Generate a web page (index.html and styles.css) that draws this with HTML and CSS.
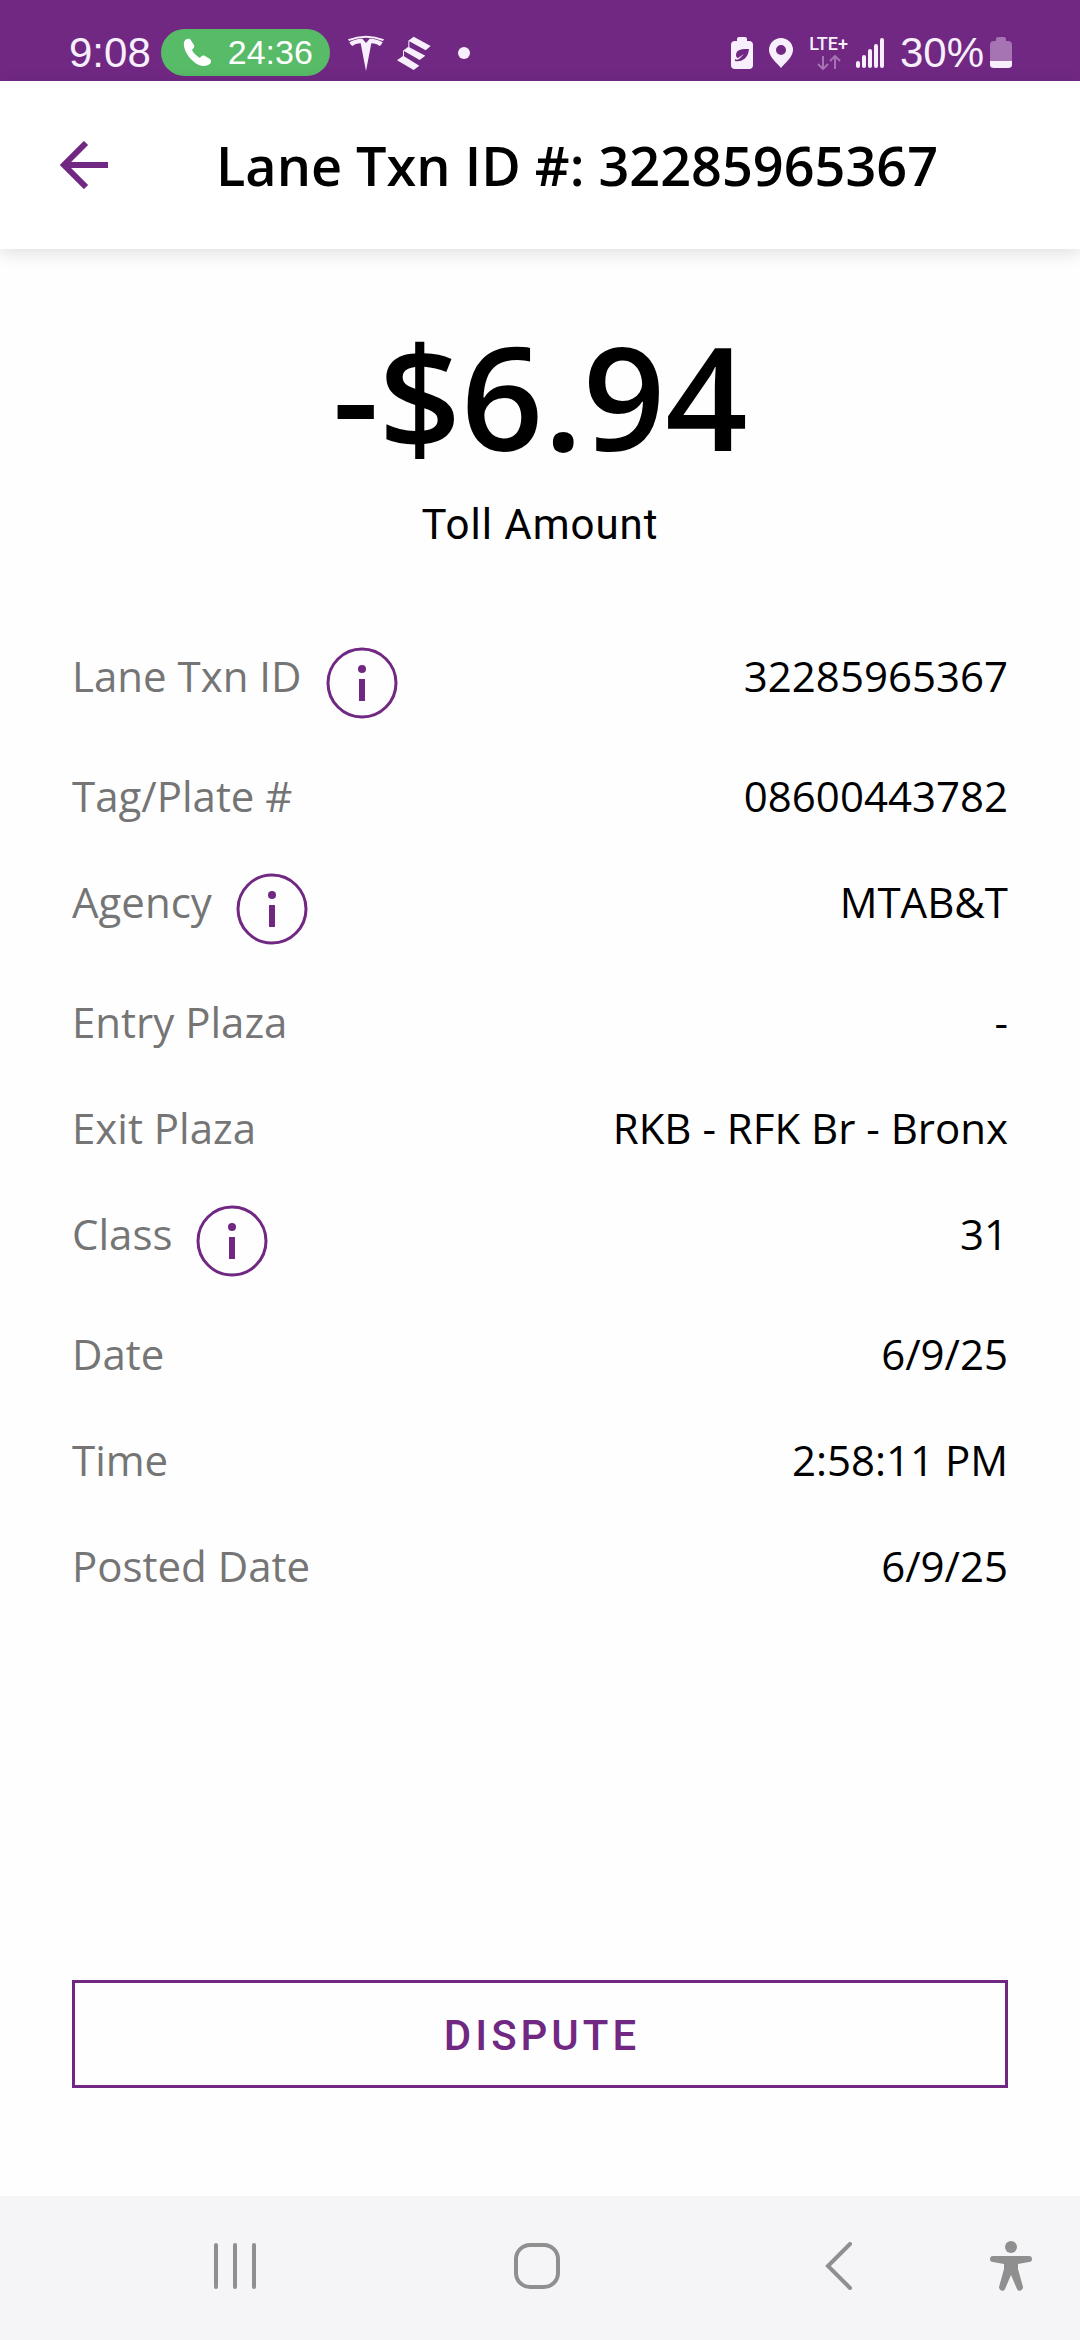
FILE: index.html
```html
<!DOCTYPE html>
<html lang="en">
<head>
    <meta charset="UTF-8">
    <meta name="viewport" content="width=device-width, initial-scale=1.0">
    <title>Lane Txn ID #: 32285965367</title>
    <link rel="stylesheet" href="styles.css">
</head>
<body>

<!-- Status bar -->
<div class="status-bar">
    <div class="status-left">
        <span class="clock">9:08</span>
        <span class="call-pill">
            <svg width="29" height="29" viewBox="0 0 29 29"><path d="M1 4 C2 1 5 0 7 1 L11 7 C12 9 10 11 9 12 C11 16 14 18 17 20 C18 18 20 17 22 18 L27 21 C29 23 28 26 25 27 C21 29 15 28 10 23 C4 18 0 10 1 4Z" fill="#fff"/></svg>
            24:36
        </span>
        <svg class="icon-tesla" width="36" height="36" viewBox="0 0 108 108" fill="#f7effb">
            <path d="M0 13 Q54 -9 108 13 L105 18 Q54 -2 3 18Z"/>
            <path d="M4 22 Q24 10 43 11 L54 24 L65 11 Q84 10 104 22 Q100 31 94 33 Q86 25 70 25 L54 108 L38 25 Q22 25 14 33 Q8 31 4 22Z"/>
        </svg>
        <svg class="icon-stairs" width="34" height="34" viewBox="0 0 102 102" fill="#f7effb">
            <path d="M50 2 L101 30 L86 43 L37 16 L37 34 L85 59 L68 72 L21 45 L21 61 L67 89 L50 102 L0 73 L18 60 L18 44 L34 32 L34 14Z"/>
        </svg>
        <span class="dot"></span>
    </div>
    <div class="status-right">
        <svg width="22" height="32" viewBox="0 0 22 32">
            <path d="M6 4 V2 Q6 0 8 0 H14 Q16 0 16 2 V4 H18 Q22 4 22 8 V28 Q22 32 18 32 H4 Q0 32 0 28 V8 Q0 4 4 4Z" fill="#f7effb"/>
            <path d="M18 12 C12 12 5 12 5 18 C5 20 6 21 7 21 L13 17 L8 22 C6 23 5 23 4 22 V24 C9 25 17 23 18 12Z" fill="#712883"/>
        </svg>
        <svg width="24" height="30" viewBox="0 0 24 30"><path fill-rule="evenodd" d="M12 0 A12 12 0 0 1 24 12 C24 19 16 25 12 30 C8 25 0 19 0 12 A12 12 0 0 1 12 0Z M12 7 A5 5 0 1 0 12 17 A5 5 0 1 0 12 7Z" fill="#f7effb"/></svg>
        <span class="network">
            LTE+
            <svg width="24" height="15" viewBox="0 0 24 15" fill="none" stroke="#a673b3" stroke-width="2"><path d="M6 1 V14 M1 9 L6 14 L11 9 M18 14 V1 M13 6 L18 1 L23 6"/></svg>
        </span>
        <svg class="icon-signal" width="28" height="30" viewBox="0 0 28 30" stroke="#f7effb" stroke-width="4" stroke-linecap="round"><path d="M2 25 V28 M8 19 V28 M14 13 V28 M20 8 V28 M26 2 V28"/></svg>
        <span class="battery-text">30%</span>
        <svg width="22" height="32" viewBox="0 0 22 32">
            <path d="M6 4 V2 Q6 0 8 0 H14 Q16 0 16 2 V4 H18 Q22 4 22 8 V24 H0 V8 Q0 4 4 4Z" fill="#a673b3"/>
            <path d="M0 24 H22 V28 Q22 31 18 31 H4 Q0 31 0 28Z" fill="#f7effb"/>
        </svg>
    </div>
</div>

<!-- App header -->
<header class="header">
    <button type="button" class="back" aria-label="Back">
        <svg width="48" height="48" viewBox="0 0 48 48" fill="none" stroke="#712883" stroke-width="6"><path d="M48 24 H6 M26 2 L4 24 L26 46"/></svg>
    </button>
    <h1 class="title">Lane Txn ID #: 32285965367</h1>
</header>

<main class="content">
    <div class="amount">-$6.94</div>
    <div class="amount-label">Toll Amount</div>

    <dl class="details">
        <div class="row">
            <dt>Lane Txn ID
                <button type="button" class="info" aria-label="About Lane Txn ID"><svg width="72" height="72" viewBox="0 0 72 72"><circle cx="36" cy="36" r="34" fill="none" stroke="#712883" stroke-width="3"/><circle cx="36" cy="22" r="4" fill="#712883"/><path d="M33 32 H39 V54 H33Z" fill="#712883"/></svg></button>
            </dt>
            <dd>32285965367</dd>
        </div>
        <div class="row">
            <dt>Tag/Plate #</dt>
            <dd>08600443782</dd>
        </div>
        <div class="row">
            <dt>Agency
                <button type="button" class="info" aria-label="About Agency"><svg width="72" height="72" viewBox="0 0 72 72"><circle cx="36" cy="36" r="34" fill="none" stroke="#712883" stroke-width="3"/><circle cx="36" cy="22" r="4" fill="#712883"/><path d="M33 32 H39 V54 H33Z" fill="#712883"/></svg></button>
            </dt>
            <dd>MTAB&amp;T</dd>
        </div>
        <div class="row">
            <dt>Entry Plaza</dt>
            <dd>-</dd>
        </div>
        <div class="row">
            <dt>Exit Plaza</dt>
            <dd>RKB - RFK Br - Bronx</dd>
        </div>
        <div class="row">
            <dt>Class
                <button type="button" class="info" aria-label="About Class"><svg width="72" height="72" viewBox="0 0 72 72"><circle cx="36" cy="36" r="34" fill="none" stroke="#712883" stroke-width="3"/><circle cx="36" cy="22" r="4" fill="#712883"/><path d="M33 32 H39 V54 H33Z" fill="#712883"/></svg></button>
            </dt>
            <dd>31</dd>
        </div>
        <div class="row">
            <dt>Date</dt>
            <dd>6/9/25</dd>
        </div>
        <div class="row">
            <dt>Time</dt>
            <dd>2:58:11 PM</dd>
        </div>
        <div class="row">
            <dt>Posted Date</dt>
            <dd>6/9/25</dd>
        </div>
    </dl>

    <button type="button" class="dispute">DISPUTE</button>
</main>

<!-- Phone navigation -->
<nav class="nav-bar">
    <button type="button" aria-label="Recent apps">
        <svg width="44" height="46" viewBox="0 0 44 46" stroke="#8f8f8f" stroke-width="4" stroke-linecap="round"><path d="M3 2 V44 M22 2 V44 M41 2 V44"/></svg>
    </button>
    <button type="button" aria-label="Home">
        <svg width="46" height="46" viewBox="0 0 46 46" fill="none" stroke="#8f8f8f" stroke-width="4"><rect x="2" y="2" width="42" height="42" rx="14"/></svg>
    </button>
    <button type="button" aria-label="Back">
        <svg width="28" height="48" viewBox="0 0 28 48" fill="none" stroke="#8f8f8f" stroke-width="4" stroke-linecap="round"><path d="M25 2 L3 24 L25 46"/></svg>
    </button>
    <button type="button" aria-label="Accessibility">
        <svg width="42" height="50" viewBox="0 0 42 50" fill="#8f8f8f"><circle cx="21" cy="6" r="6"/><path d="M3 15 H39 A3 3 0 0 1 39 21 L28 23 V28 L33 46 C33 50 28 51 27 48 L21 34 L15 48 C14 51 9 50 9 46 L14 28 V23 L3 21 A3 3 0 0 1 3 15Z"/></svg>
    </button>
</nav>

</body>
</html>
```
FILE: styles.css
```css
* {
    box-sizing: border-box;
}

body {
    margin: 0;
    min-height: 100vh;
    display: flex;
    flex-direction: column;
    background-color: #fefefe;
    color: #000;
    font-family: "Open Sans", sans-serif;
}

button {
    border: none;
    padding: 0;
    background: none;
    cursor: pointer;
}

svg {
    display: block;
}

/* Status bar */
.status-bar {
    display: flex;
    justify-content: space-between;
    height: 81px;
    padding: 24px 68px 0 69px;
    background-color: #712883;
    color: #f7effb;
    font-family: "Liberation Sans", sans-serif;
}

.status-left, .status-right {
    display: flex;
    align-items: center;
}

.clock, .battery-text {
    font-size: 42px;
    line-height: 48px;
}

.call-pill {
    display: flex;
    align-items: center;
    gap: 16px;
    height: 47px;
    margin-left: 10px;
    padding: 0 17px 0 22px;
    border-radius: 24px;
    background-color: #57bb67;
    color: #fff;
    font-size: 34px;
}

.icon-tesla {
    margin-left: 18px;
}

.icon-stairs {
    margin-left: 13px;
}

.dot {
    width: 12px;
    height: 12px;
    margin-left: 27px;
    border-radius: 50%;
    background-color: #f7effb;
}

.status-right {
    gap: 16px;
}

.network {
    display: flex;
    flex-direction: column;
    align-items: center;
    gap: 2px;
    font-family: Roboto, sans-serif;
    font-size: 18px;
    font-weight: 500;
    line-height: 18px;
}

.icon-signal {
    margin-left: -8px;
}

.battery-text {
    margin-right: -10px;
}

/* Header */
.header {
    display: flex;
    align-items: center;
    gap: 108px;
    height: 168px;
    padding: 0 60px;
    background-color: #fff;
    box-shadow: 0 4px 16px rgba(0, 0, 0, 0.13);
}

.title {
    margin: 0;
    font-size: 54px;
    font-weight: 600;
}

/* Toll details */
.content {
    flex: 1;
    display: flex;
    flex-direction: column;
    padding: 48px 72px 108px;
}

.amount {
    font-size: 144px;
    font-weight: 600;
    line-height: 196px;
    text-align: center;
}

.amount-label {
    margin-top: 6px;
    font-family: Roboto, sans-serif;
    font-size: 42px;
    line-height: 52px;
    letter-spacing: 1px;
    text-align: center;
}

.details {
    display: flex;
    flex-direction: column;
    gap: 48px;
    margin: 96px 0 48px;
    font-size: 42px;
    line-height: 58px;
}

.row {
    display: flex;
    justify-content: space-between;
    align-items: flex-start;
}

.row dt {
    display: flex;
    align-items: flex-start;
    gap: 24px;
    color: #757575;
}

.row dd {
    margin: 0;
    text-align: right;
}

.dispute {
    height: 108px;
    margin-top: auto;
    padding: 2px 0 0 4px;
    border: 3px solid #712883;
    color: #712883;
    font-family: Roboto, sans-serif;
    font-size: 42px;
    font-weight: 500;
    letter-spacing: 4px;
}

/* Phone navigation */
.nav-bar {
    display: grid;
    grid-template-columns: 1fr 1fr 1fr 42px;
    align-items: center;
    height: 144px;
    padding: 0 48px 4px 84px;
    background-color: #f5f5f8;
}

.nav-bar button {
    display: flex;
    justify-content: center;
}
```
